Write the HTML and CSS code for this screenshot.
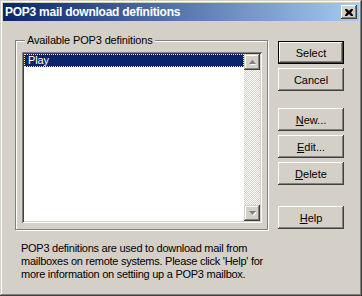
FILE: index.html
```html
<!DOCTYPE html>
<html lang="en">

<head>
    <meta charset="UTF-8">
    <title>POP3 mail download definitions</title>
    <link rel="stylesheet" href="styles.css">
</head>

<body>
    <div class="window">
        <div class="titlebar">
            <span class="title">POP3 mail download definitions</span>
            <div class="close-btn">
                <svg width="8" height="7" viewBox="0 0 8 7">
                    <path d="M0 0h2l2 2 2-2h2v1L6 3.5 8 6v1H6L4 5 2 7H0V6l2-2.5L0 1z" fill="#000"/>
                </svg>
            </div>
        </div>

        <div class="content">
            <div class="left-col">
                <div class="group">
                    <span class="group-label">Available POP3 definitions</span>
                    <div class="listbox">
                        <div class="list">
                            <div class="list-item selected">Play</div>
                        </div>
                        <div class="scrollbar">
                            <div class="scroll-btn">
                                <svg width="7" height="5" viewBox="0 0 7 5">
                                    <polygon points="1,5 4,2 7,5" fill="#fff"/>
                                    <polygon points="0,4 3,0 3.5,0 7,4" fill="#808080"/>
                                </svg>
                            </div>
                            <div class="scroll-track"></div>
                            <div class="scroll-btn">
                                <svg width="7" height="5" viewBox="0 0 7 5">
                                    <polygon points="1,1 8,1 4.5,5" fill="#fff"/>
                                    <polygon points="0,0 7,0 3.5,4" fill="#808080"/>
                                </svg>
                            </div>
                        </div>
                    </div>
                </div>

                <p class="info">
                    POP3 definitions are used to download mail from<br>
                    mailboxes on remote systems. Please click 'Help' for<br>
                    more information on settiing up a POP3 mailbox.
                </p>
            </div>

            <div class="buttons">
                <button class="btn default">Select</button>
                <button class="btn">Cancel</button>
                <button class="btn gap-new"><u>N</u>ew...</button>
                <button class="btn"><u>E</u>dit...</button>
                <button class="btn"><u>D</u>elete</button>
                <button class="btn gap-help"><u>H</u>elp</button>
            </div>
        </div>
    </div>
</body>

</html>
```

FILE: styles.css
```css
* {
    margin: 0;
    padding: 0;
    box-sizing: border-box;
}

body {
    background: #d4d0c8;
    font-family: "Liberation Sans", Arial, sans-serif;
    font-size: 11px;
    letter-spacing: -0.15px;
    color: #000;
}

.window {
    width: 362px;
    height: 296px;
    padding: 3px;
    background: #d4d0c8;
    box-shadow: inset -1px -1px #404040, inset 1px 1px #d4d0c8,
                inset -2px -2px #808080, inset 2px 2px #fff;
}

.titlebar {
    height: 18px;
    display: flex;
    align-items: center;
    justify-content: space-between;
    padding: 0 2px 0 2px;
    background: linear-gradient(to right, #0a246a, #a6caf0);
}

.title {
    color: #fff;
    font-weight: bold;
    font-size: 12px;
    letter-spacing: -0.25px;
}

.close-btn {
    width: 16px;
    height: 14px;
    display: flex;
    align-items: center;
    justify-content: center;
    background: #d4d0c8;
    box-shadow: inset -1px -1px #404040, inset 1px 1px #fff,
                inset -2px -2px #808080;
}

.content {
    display: flex;
    padding: 19px 0 0 12px;
}

.left-col {
    width: 253px;
}

.group {
    position: relative;
    height: 190px;
    padding: 11px 5px 0 6px;
    border: 1px solid #808080;
    box-shadow: 1px 1px 0 #fff, inset 1px 1px 0 #fff;
}

.group-label {
    position: absolute;
    top: -8px;
    left: 9px;
    padding: 0 2px;
    line-height: 14px;
    background: #d4d0c8;
}

.listbox {
    display: flex;
    height: 171px;
    padding: 2px;
    background: #fff;
    box-shadow: inset 1px 1px #808080, inset -1px -1px #fff,
                inset 2px 2px #404040, inset -2px -2px #d4d0c8;
}

.list {
    flex: 1;
}

.list-item {
    height: 13px;
    line-height: 13px;
    padding-left: 4px;
}

.list-item.selected {
    background: #0a246a;
    color: #fff;
    outline: 1px dotted #f0e8a0;
    outline-offset: -1px;
}

.scrollbar {
    width: 16px;
    display: flex;
    flex-direction: column;
}

.scroll-btn {
    height: 16px;
    display: flex;
    align-items: center;
    justify-content: center;
    background: #d4d0c8;
    box-shadow: inset -1px -1px #404040, inset 1px 1px #d4d0c8,
                inset -2px -2px #808080, inset 2px 2px #fff;
}

.scroll-track {
    flex: 1;
    background: repeating-conic-gradient(#d4d0c8 0 25%, #fff 0 50%) 0 0 / 2px 2px;
}

.info {
    margin: 12px 0 0 6px;
    line-height: 13px;
    white-space: nowrap;
    letter-spacing: -0.26px;
}

.buttons {
    display: flex;
    flex-direction: column;
    gap: 4px;
    margin: 1px 0 0 10px;
}

.btn {
    width: 66px;
    height: 23px;
    border: none;
    background: #d4d0c8;
    font-family: "Liberation Sans", Arial, sans-serif;
    font-size: 11px;
    color: #000;
    box-shadow: inset -1px -1px #404040, inset 1px 1px #fff,
                inset -2px -2px #808080;
}

.btn.default {
    border: 1px solid #000;
    box-shadow: inset -1px -1px #404040, inset 1px 1px #fff,
                inset -2px -2px #808080;
}

.gap-new {
    margin-top: 13px;
}

.gap-help {
    margin-top: 17px;
}
```
